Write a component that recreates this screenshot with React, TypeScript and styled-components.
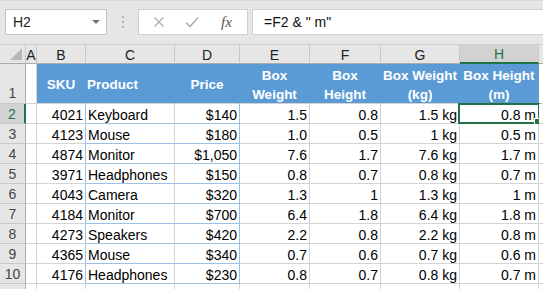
import React from "react";
import styled, { createGlobalStyle, css } from "styled-components";

const GlobalStyle = createGlobalStyle`
  html, body { margin: 0; padding: 0; background: #fff; }
  body { font-family: "Liberation Sans", Arial, sans-serif; overflow: hidden; }
  * { box-sizing: border-box; }
`;

const Page = styled.div`
  width: 543px;
  height: 289px;
  overflow: hidden;
  display: flex;
  flex-direction: column;
`;

const Toolbar = styled.div`
  height: 44px;
  flex: none;
  background: #e6e6e6;
  border-top: 1px solid #d8d8d8;
  display: flex;
  align-items: center;
  padding: 0 0 1px 5px;
`;

const NameBox = styled.div`
  width: 102px;
  height: 26px;
  background: #fff;
  border: 1px solid #c6c6c6;
  display: flex;
  align-items: center;
  justify-content: space-between;
  padding: 0 6px 0 7px;
  font-size: 14px;
  color: #222;
`;

const Caret = styled.span`
  width: 0;
  height: 0;
  border-left: 4px solid transparent;
  border-right: 4px solid transparent;
  border-top: 4px solid #777;
`;

const Dots = styled.div`
  width: 31px;
  display: flex;
  flex-direction: column;
  align-items: center;
  gap: 3px;
  span {
    width: 2px;
    height: 2px;
    background: #b3b3b3;
  }
`;

const FxBox = styled.div`
  width: 110px;
  height: 26px;
  background: #fff;
  border: 1px solid #d0d0d0;
  display: flex;
  align-items: center;
  padding-left: 14px;
  gap: 20px;
`;

const FxIcon = styled.span`
  font-family: "Liberation Serif", serif;
  font-style: italic;
  font-size: 15px;
  color: #555;
  margin-left: 2px;
`;

const FormulaInput = styled.div`
  flex: 1;
  height: 26px;
  margin-left: 4px;
  background: #fff;
  border: 1px solid #d0d0d0;
  border-right: none;
  display: flex;
  align-items: center;
  padding-left: 11px;
  font-size: 14px;
  color: #111;
`;

const Grid = styled.div`
  display: grid;
  grid-template-columns: 26px 11px 49px 89px 65px 70px 71px 79px 79px 1fr;
  grid-template-rows: 20px 40px repeat(9, 20px) 20px;
  font-size: 14px;
`;

const Corner = styled.div`
  background: #e6e6e6;
  border-right: 1px solid #c8c8c8;
  border-bottom: 1px solid #ababab;
  border-top: 1px solid #d0d0d0;
  position: relative;
  &::after {
    content: "";
    position: absolute;
    right: 3px;
    bottom: 3px;
    width: 0;
    height: 0;
    border-left: 12px solid transparent;
    border-bottom: 12px solid #b7b7b7;
  }
`;

const ColHead = styled.div<{ $active?: boolean }>`
  background: ${(p) => (p.$active ? "#d2d2d2" : "#e6e6e6")};
  border-top: 1px solid #d0d0d0;
  border-right: 1px solid #c8c8c8;
  border-bottom: ${(p) => (p.$active ? "2px solid #217346" : "1px solid #ababab")};
  display: flex;
  align-items: center;
  justify-content: center;
  color: ${(p) => (p.$active ? "#217346" : "#222")};
  font-size: 14px;
  padding-top: 1px;
`;

const RowHead = styled.div<{ $active?: boolean; $tall?: boolean }>`
  background: ${(p) => (p.$active ? "#d2d2d2" : "#e6e6e6")};
  border-bottom: 1px solid #c8c8c8;
  border-right: ${(p) => (p.$active ? "2px solid #217346" : "1px solid #ababab")};
  display: flex;
  align-items: ${(p) => (p.$tall ? "flex-end" : "center")};
  justify-content: center;
  padding-bottom: ${(p) => (p.$tall ? "2px" : "0")};
  color: ${(p) => (p.$active ? "#217346" : "#444")};
  font-size: 14px;
`;

const Cell = styled.div<{
  $align?: "left" | "right" | "center";
  $head?: boolean;
  $blueB?: boolean;
  $blueR?: boolean;
}>`
  position: relative;
  background: #fff;
  border-right: 1px solid ${(p) => (p.$blueR ? "#9bc2e6" : "#d4d4d4")};
  border-bottom: 1px solid ${(p) => (p.$blueB ? "#9bc2e6" : "#d4d4d4")};
  display: flex;
  align-items: center;
  justify-content: ${(p) =>
    p.$align === "right" ? "flex-end" : p.$align === "center" ? "center" : "flex-start"};
  padding: 2px 2px 0 2px;
  color: #000;
  white-space: nowrap;
  ${(p) =>
    p.$head &&
    css`
      background: #5b9bd5;
      border-right-color: #5b9bd5;
      border-bottom-color: #d4d4d4;
      color: #fff;
      font-weight: bold;
      font-size: 13.5px;
      line-height: 19px;
      white-space: normal;
      text-align: ${p.$align === "left" ? "left" : "center"};
      padding: 2px 1px 0;
    `}
`;

const Selection = styled.div`
  position: absolute;
  left: -2px;
  top: -1px;
  right: -2px;
  bottom: -1px;
  border: 2px solid #217346;
  pointer-events: none;
  &::after {
    content: "";
    position: absolute;
    right: -4px;
    bottom: -4px;
    width: 6px;
    height: 6px;
    background: #217346;
    border: 1px solid #fff;
  }
`;

const cols = ["A", "B", "C", "D", "E", "F", "G", "H", ""];

type Row = [number, string, string, string, string, string, string];
const data: Row[] = [
  [4021, "Keyboard", "$140", "1.5", "0.8", "1.5 kg", "0.8 m"],
  [4123, "Mouse", "$180", "1.0", "0.5", "1 kg", "0.5 m"],
  [4874, "Monitor", "$1,050", "7.6", "1.7", "7.6 kg", "1.7 m"],
  [3971, "Headphones", "$150", "0.8", "0.7", "0.8 kg", "0.7 m"],
  [4043, "Camera", "$320", "1.3", "1", "1.3 kg", "1 m"],
  [4184, "Monitor", "$700", "6.4", "1.8", "6.4 kg", "1.8 m"],
  [4273, "Speakers", "$420", "2.2", "0.8", "2.2 kg", "0.8 m"],
  [4365, "Mouse", "$340", "0.7", "0.6", "0.7 kg", "0.6 m"],
  [4176, "Headphones", "$230", "0.8", "0.7", "0.8 kg", "0.7 m"],
];

const headers: { text: React.ReactNode; align: "left" | "center" }[] = [
  { text: "SKU", align: "center" },
  { text: "Product", align: "left" },
  { text: "Price", align: "center" },
  { text: <>Box<br />Weight</>, align: "center" },
  { text: <>Box<br />Height</>, align: "center" },
  { text: <>Box Weight<br />(kg)</>, align: "center" },
  { text: <>Box Height<br />(m)</>, align: "center" },
];

const CancelIcon = () => (
  <svg width="12" height="12" viewBox="0 0 12 12">
    <path d="M1.5 1.5 L10.5 10.5 M10.5 1.5 L1.5 10.5" stroke="#b0b0b0" strokeWidth="1.3" fill="none" />
  </svg>
);

const CheckIcon = () => (
  <svg width="14" height="12" viewBox="0 0 14 12">
    <path d="M1 6.5 L5 10.5 L13 1.5" stroke="#b0b0b0" strokeWidth="1.6" fill="none" />
  </svg>
);

export default function App() {
  return (
    <>
      <GlobalStyle />
      <Page>
        <Toolbar>
          <NameBox>
            <span>H2</span>
            <Caret />
          </NameBox>
          <Dots>
            <span />
            <span />
            <span />
          </Dots>
          <FxBox>
            <CancelIcon />
            <CheckIcon />
            <FxIcon>fx</FxIcon>
          </FxBox>
          <FormulaInput>=F2 &amp; " m"</FormulaInput>
        </Toolbar>
        <Grid>
          <Corner />
          {cols.map((c, i) => (
            <ColHead key={i} $active={c === "H"}>
              {c}
            </ColHead>
          ))}

          <RowHead $tall>1</RowHead>
          <Cell />
          {headers.map((h, i) => (
            <Cell key={i} $head $align={h.align}>
              <span>{h.text}</span>
            </Cell>
          ))}
          <Cell />

          {data.map((r, ri) => (
            <React.Fragment key={ri}>
              <RowHead $active={ri === 0}>{ri + 2}</RowHead>
              <Cell />
              <Cell $align="right" $blueR>{r[0]}</Cell>
              <Cell $align="left" $blueB>{r[1]}</Cell>
              <Cell $align="right" $blueB $blueR>{r[2]}</Cell>
              <Cell $align="right">{r[3]}</Cell>
              <Cell $align="right">{r[4]}</Cell>
              <Cell $align="right">{r[5]}</Cell>
              <Cell $align="right">
                {r[6]}
                {ri === 0 && <Selection />}
              </Cell>
              <Cell />
            </React.Fragment>
          ))}

          <RowHead />
          {cols.map((_, i) => (
            <Cell key={i} />
          ))}
        </Grid>
      </Page>
    </>
  );
}
